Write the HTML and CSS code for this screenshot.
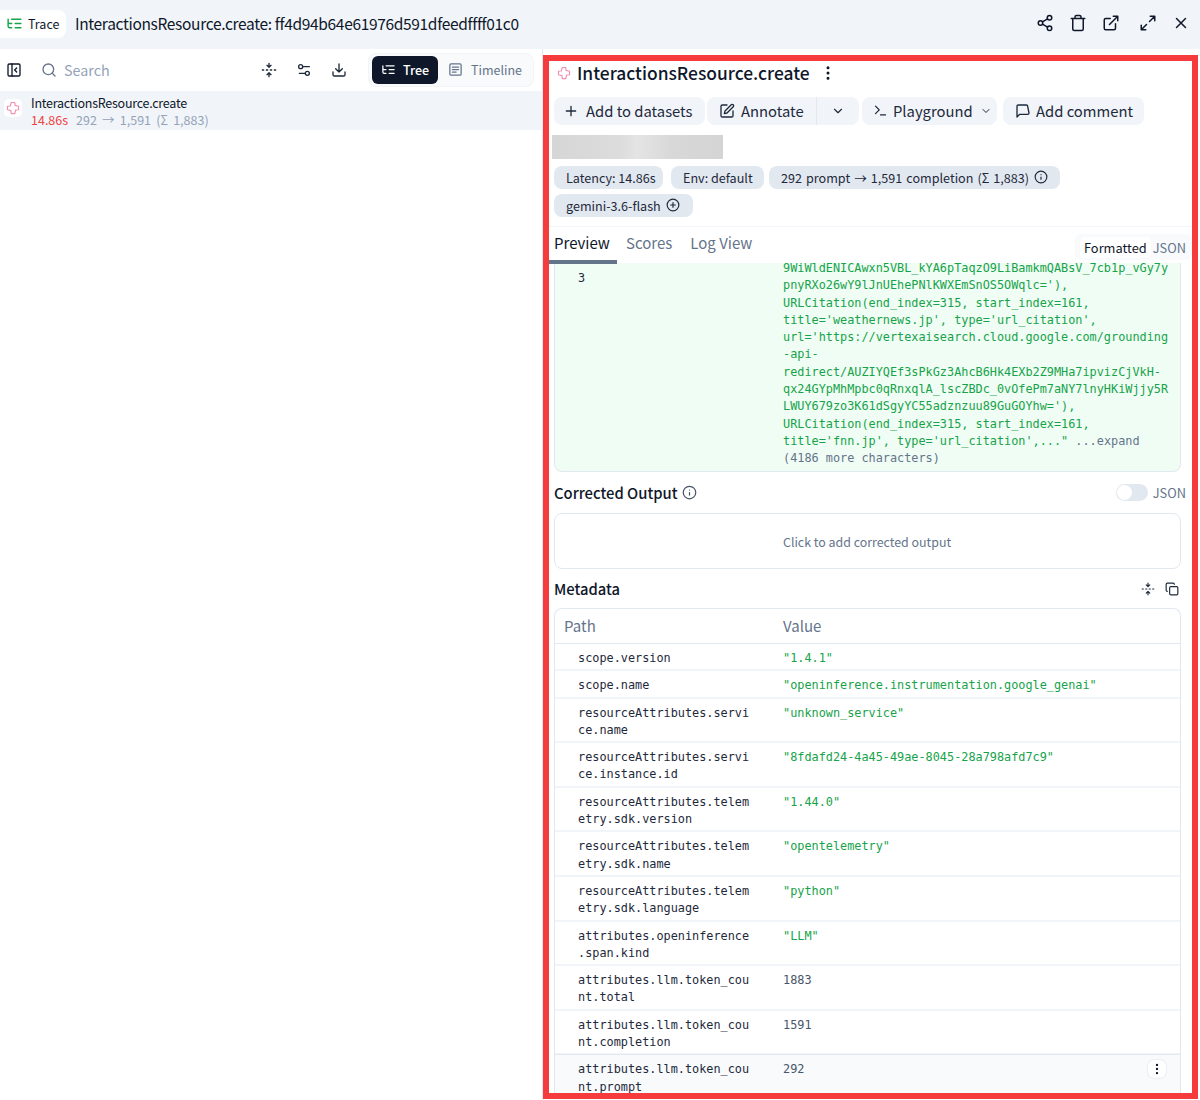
FILE: index.html
```html
<!DOCTYPE html>
<html lang="en">
<head>
<meta charset="utf-8">
<title>Trace</title>
<link rel="stylesheet" href="styles.css">
</head>
<body>
<svg class="defs" aria-hidden="true">
  <symbol id="i-share" viewBox="0 0 24 24"><circle cx="18" cy="5" r="3"/><circle cx="6" cy="12" r="3"/><circle cx="18" cy="19" r="3"/><path d="M8.59 13.51 15.42 17.49M15.41 6.51 8.59 10.49"/></symbol>
  <symbol id="i-trash" viewBox="0 0 24 24"><path d="M3 6h18M19 6v14c0 1-1 2-2 2H7c-1 0-2-1-2-2V6M8 6V4c0-1 1-2 2-2h4c1 0 2 1 2 2v2"/></symbol>
  <symbol id="i-ext" viewBox="0 0 24 24"><path d="M15 3h6v6M10 14 21 3M18 13v6a2 2 0 0 1-2 2H5a2 2 0 0 1-2-2V8a2 2 0 0 1 2-2h6"/></symbol>
  <symbol id="i-expand" viewBox="0 0 24 24"><path d="M15 3h6v6M21 3l-7 7M9 21H3v-6M3 21l7-7"/></symbol>
  <symbol id="i-x" viewBox="0 0 24 24"><path d="M18 6 6 18M6 6l12 12"/></symbol>
  <symbol id="i-panel" viewBox="0 0 24 24"><rect x="3" y="3" width="18" height="18" rx="2"/><path d="M9 3v18M16 15l-3-3 3-3"/></symbol>
  <symbol id="i-search" viewBox="0 0 24 24"><circle cx="11" cy="11" r="8"/><path d="m21 21-4.3-4.3"/></symbol>
  <symbol id="i-fold" viewBox="0 0 24 24"><path d="M12 22v-6M12 8V2M4 12H2M10 12H8M16 12h-2M22 12h-2M15 19l-3-3-3 3M15 5l-3 3-3-3"/></symbol>
  <symbol id="i-settings" viewBox="0 0 24 24"><path d="M20 7h-9M14 17H5"/><circle cx="17" cy="17" r="3"/><circle cx="7" cy="7" r="3"/></symbol>
  <symbol id="i-download" viewBox="0 0 24 24"><path d="M21 15v4a2 2 0 0 1-2 2H5a2 2 0 0 1-2-2v-4M7 10l5 5 5-5M12 15V3"/></symbol>
  <symbol id="i-tree" viewBox="0 0 24 24"><path d="M21 12h-8M21 6H8M21 18h-8M3 6v4c0 1.100.9 2 2 2h3M3 10v6c0 1.100.9 2 2 2h3"/></symbol>
  <symbol id="i-timeline" viewBox="0 0 24 24"><rect x="3" y="3" width="18" height="18" rx="2"/><path d="M7 8h10M7 12h10M7 16h6"/></symbol>
  <symbol id="i-plus" viewBox="0 0 24 24"><path d="M5 12h14M12 5v14"/></symbol>
  <symbol id="i-pen" viewBox="0 0 24 24"><path d="M12 3H5a2 2 0 0 0-2 2v14a2 2 0 0 0 2 2h14a2 2 0 0 0 2-2v-7"/><path d="M18.375 2.625a2.121 2.121 0 1 1 3 3L12 15l-4 1 1-4Z"/></symbol>
  <symbol id="i-chev" viewBox="0 0 24 24"><path d="m6 9 6 6 6-6"/></symbol>
  <symbol id="i-term" viewBox="0 0 24 24"><path d="M4 17l6-6-6-6M12 19h8"/></symbol>
  <symbol id="i-msg" viewBox="0 0 24 24"><path d="M21 15a2 2 0 0 1-2 2H7l-4 4V5a2 2 0 0 1 2-2h12a2 2 0 0 1 2 2z"/></symbol>
  <symbol id="i-info" viewBox="0 0 24 24"><circle cx="12" cy="12" r="10"/><path d="M12 16v-4M12 8h.01"/></symbol>
  <symbol id="i-pluscircle" viewBox="0 0 24 24"><circle cx="12" cy="12" r="10"/><path d="M8 12h8M12 8v8"/></symbol>
  <symbol id="i-copy" viewBox="0 0 24 24"><rect x="8" y="8" width="14" height="14" rx="2"/><path d="M4 16c-1.100 0-2-.9-2-2V4c0-1.100.9-2 2-2h10c1.100 0 2 .9 2 2"/></symbol>
  <symbol id="i-gem" viewBox="0 0 24 24"><path d="M9 2.500h6l.5 5 6 1.500v6l-5 .5-1.500 6H9l-.5-5-6-1.500V9l5-.5z"/></symbol>
  <symbol id="i-more" viewBox="0 0 24 24"><circle cx="12" cy="5" r="1"/><circle cx="12" cy="12" r="1"/><circle cx="12" cy="19" r="1"/></symbol>
</svg>

<header class="topbar">
  <div class="trace-tag"><svg class="ic ic-17 green"><use href="#i-tree"/></svg><span>Trace</span></div>
  <div class="trace-title">InteractionsResource.create: ff4d94b64e61976d591dfeedffff01c0</div>
  <div class="top-actions">
    <svg class="ic ic-18"><use href="#i-share"/></svg>
    <svg class="ic ic-18"><use href="#i-trash"/></svg>
    <svg class="ic ic-18"><use href="#i-ext"/></svg>
    <svg class="ic ic-18 gap-l"><use href="#i-expand"/></svg>
    <svg class="ic ic-18"><use href="#i-x"/></svg>
  </div>
</header>

<main class="layout">
  <aside class="tree-pane">
    <div class="tree-bar">
      <svg class="ic ic-16 dark"><use href="#i-panel"/></svg>
      <div class="search"><svg class="ic ic-16 grey"><use href="#i-search"/></svg><span>Search</span></div>
      <div class="tree-tools">
        <svg class="ic ic-16"><use href="#i-fold"/></svg>
        <svg class="ic ic-16"><use href="#i-settings"/></svg>
        <svg class="ic ic-16"><use href="#i-download"/></svg>
      </div>
      <div class="view-switch">
        <div class="view on"><svg class="ic ic-15"><use href="#i-tree"/></svg>Tree</div>
        <div class="view"><svg class="ic ic-15"><use href="#i-timeline"/></svg>Timeline</div>
      </div>
    </div>
    <div class="tree-row">
      <div class="gem-wrap"><svg class="ic ic-14 pink"><use href="#i-gem"/></svg></div>
      <div class="tree-text">
        <div class="tree-name">InteractionsResource.create</div>
        <div class="tree-meta"><span class="red">14.86s</span><span class="wider">292 → 1,591 (Σ 1,883)</span></div>
      </div>
    </div>
  </aside>

  <section class="detail">
    <div class="detail-title">
      <svg class="ic ic-14 pink"><use href="#i-gem"/></svg>
      <h1>InteractionsResource.create</h1>
      <svg class="ic ic-18 filled"><use href="#i-more"/></svg>
    </div>

    <div class="actions">
      <div class="btn b-add"><svg class="ic ic-16"><use href="#i-plus"/></svg>Add to datasets</div>
      <div class="btn-group">
        <div class="btn b-ann"><svg class="ic ic-16"><use href="#i-pen"/></svg>Annotate</div>
        <div class="btn b-chev"><svg class="ic ic-14"><use href="#i-chev"/></svg></div>
      </div>
      <div class="btn b-play"><svg class="ic ic-15"><use href="#i-term"/></svg>Playground<svg class="ic ic-12"><use href="#i-chev"/></svg></div>
      <div class="btn b-com"><svg class="ic ic-16"><use href="#i-msg"/></svg>Add comment</div>
    </div>

    <div class="blurred"></div>

    <div class="badges">
      <span class="badge b1">Latency: 14.86s</span>
      <span class="badge b2">Env: default</span>
      <span class="badge b3 wide">292 prompt → 1,591 completion (Σ 1,883)<svg class="ic ic-14"><use href="#i-info"/></svg></span>
      <span class="badge b4">gemini-3.6-flash<svg class="ic ic-14"><use href="#i-pluscircle"/></svg></span>
    </div>

    <div class="tabs">
      <div class="tab on">Preview</div>
      <div class="tab">Scores</div>
      <div class="tab">Log View</div>
      <div class="format">
        <span class="fmt on">Formatted</span><span class="fmt">JSON</span>
      </div>
    </div>

    <div class="code-box">
      <div class="code-num">3</div>
      <div class="code">
<pre>9WiWldENICAwxn5VBL_kYA6pTaqzO9LiBamkmQABsV_7cb1p_vGy7y
pnyRXo26wY9lJnUEhePNlKWXEmSnOS5OWqlc='),
URLCitation(end_index=315, start_index=161,
title='weathernews.jp', type='url_citation',
url='https://vertexaisearch.cloud.google.com/grounding
-api-
redirect/AUZIYQEf3sPkGz3AhcB6Hk4EXb2Z9MHa7ipvizCjVkH-
qx24GYpMhMpbc0qRnxqlA_lscZBDc_0vOfePm7aNY7lnyHKiWjjy5R
LWUY679zo3K61dSgyYC55adznzuu89GuGOYhw='),
URLCitation(end_index=315, start_index=161,</pre>
<pre>title='fnn.jp', type='url_citation',..." <span class="muted">...expand</span></pre>
<pre class="muted">(4186 more characters)</pre>
      </div>
    </div>

    <div class="section-head corrected">
      <h2>Corrected Output</h2>
      <svg class="ic ic-15 grey-d"><use href="#i-info"/></svg>
      <div class="toggle-wrap"><span class="toggle"><i></i></span><span>JSON</span></div>
    </div>
    <div class="corrected-box">Click to add corrected output</div>

    <div class="section-head meta">
      <h2>Metadata</h2>
      <div class="meta-tools">
        <svg class="ic ic-14"><use href="#i-fold"/></svg>
        <svg class="ic ic-14"><use href="#i-copy"/></svg>
      </div>
    </div>

    <div class="table">
      <div class="tr th"><div>Path</div><div>Value</div></div>
      <div class="tr"><div class="path">scope.version</div><div class="val">"1.4.1"</div></div>
      <div class="tr"><div class="path">scope.name</div><div class="val">"openinference.instrumentation.google_genai"</div></div>
      <div class="tr"><div class="path">resourceAttributes.service.name</div><div class="val">"unknown_service"</div></div>
      <div class="tr"><div class="path">resourceAttributes.service.instance.id</div><div class="val">"8fdafd24-4a45-49ae-8045-28a798afd7c9"</div></div>
      <div class="tr"><div class="path">resourceAttributes.telemetry.sdk.version</div><div class="val">"1.44.0"</div></div>
      <div class="tr"><div class="path">resourceAttributes.telemetry.sdk.name</div><div class="val">"opentelemetry"</div></div>
      <div class="tr"><div class="path">resourceAttributes.telemetry.sdk.language</div><div class="val">"python"</div></div>
      <div class="tr"><div class="path">attributes.openinference.span.kind</div><div class="val">"LLM"</div></div>
      <div class="tr"><div class="path">attributes.llm.token_count.total</div><div class="val num">1883</div></div>
      <div class="tr"><div class="path">attributes.llm.token_count.completion</div><div class="val num">1591</div></div>
      <div class="tr hover"><div class="path">attributes.llm.token_count.prompt</div><div class="val num">292</div>
        <div class="row-menu"><svg class="ic ic-14 filled"><use href="#i-more"/></svg></div>
      </div>
    </div>
  </section>
</main>
</body>
</html>
```

FILE: styles.css
```css
* { box-sizing: border-box; }
html, body { margin: 0; height: 1100px; overflow: hidden; }
body {
  background: #f1f5f9;
  color: #0f172a;
  font-family: "Noto Sans CJK SC", "Noto Sans", sans-serif;
  font-size: 14px;
}
.defs { width: 0; height: 0; position: absolute; }

.ic {
  fill: none;
  stroke: currentColor;
  stroke-width: 2;
  stroke-linecap: round;
  stroke-linejoin: round;
  flex: none;
}
.ic-12 { width: 12px; height: 12px; }
.ic-14 { width: 14px; height: 14px; }
.ic-15 { width: 15px; height: 15px; }
.ic-16 { width: 16px; height: 16px; }
.ic-17 { width: 17px; height: 17px; }
.ic-18 { width: 18px; height: 18px; }
.green { color: #16a34a; }
.pink { color: #f48fb1; }
.grey { color: #64748b; }
.grey-d { color: #475569; }
.dark { color: #0f172a; }
.filled { fill: currentColor; }
.wide { word-spacing: 1.200px; }
.wider { word-spacing: 2.400px; }

/* top bar */
.topbar {
  height: 49px;
  display: flex;
  align-items: center;
  padding-right: 10px;
}
.trace-tag {
  width: 66px;
  height: 28px;
  margin-top: -2px;
  background: #fff;
  border-radius: 0 8px 8px 0;
  display: flex;
  align-items: center;
  gap: 5px;
  padding-left: 6px;
  font-size: 12.500px;
}
.trace-title { margin-left: 9px; font-size: 15.500px; letter-spacing: -.33px; margin-top: -3px; }
.top-actions {
  margin-left: auto;
  margin-top: -3px;
  display: flex;
  align-items: center;
  gap: 15px;
  color: #0f172a;
}
.gap-l { margin-left: 4px; }

/* layout */
.layout { display: flex; height: 1051px; background: #fff; }
.tree-pane { width: 543px; flex: none; border-right: 1px solid #e2e8f0; }

.tree-bar {
  height: 42px;
  display: flex;
  align-items: center;
  padding-left: 6px;
  padding-right: 8px;
}
.search {
  display: flex;
  align-items: center;
  gap: 7px;
  margin-left: 19px;
  margin-top: -1px;
  font-size: 14.300px;
  color: #94a3b8;
}
.tree-tools { margin-left: auto; display: flex; gap: 19px; color: #1e293b; margin-right: 21px; }
.view-switch {
  width: 166px;
  height: 34px;
  padding: 3px;
  background: #f8fafc;
  border: 1px solid #f1f5f9;
  border-radius: 8px;
  display: flex;
  align-items: center;
}
.view {
  display: flex;
  align-items: center;
  gap: 8px;
  height: 28px;
  padding: 0 10px 1px;
  border-radius: 6px;
  font-size: 12.500px;
  color: #64748b;
}
.view.on { background: #0f172a; color: #fff; width: 66px; font-weight: 500; padding: 0 9px 1px; gap: 7px; }

.tree-row {
  height: 39px;
  background: #f1f5f9;
  display: flex;
  align-items: center;
  padding-left: 4px;
}
.gem-wrap {
  width: 18px;
  height: 18px;
  border-radius: 5px;
  background: #fff;
  display: flex;
  align-items: center;
  justify-content: center;
  margin-top: -6px;
}
.tree-text { margin-left: 9px; }
.tree-name { font-size: 12.500px; letter-spacing: -.25px; line-height: 17px; }
.tree-meta { font-size: 12.500px; line-height: 17px; color: #94a3b8; display: flex; gap: 8px; }
.red { color: #ef4444; }

/* detail */
.detail {
  margin-top: 6px;
  width: 655px;
  height: 1044px;
  flex: none;
  border: 6px solid #f53b3b;
  padding: 0 0 0 5px;
  overflow: hidden;
  background: #fff;
}
.detail-title {
  height: 26px;
  display: flex;
  align-items: center;
  margin-top: -1px;
  padding-left: 3px;
}
.detail-title h1 { margin: 0 6px 0 6px; font-size: 17.400px; font-weight: 500; line-height: 26px; }
.detail-title .filled { margin-left: 3px; }

.actions { display: flex; margin-top: 11px; gap: 2px; }
.btn {
  height: 28px;
  padding-bottom: 1px;
  background: #f1f5f9;
  border-radius: 8px;
  display: flex;
  align-items: center;
  font-size: 14.800px;
  color: #1e293b;
}
.b-add { width: 151px; padding-left: 9px; gap: 7px; }
.btn-group { display: flex; margin-right: 1px; }
.b-ann { width: 110px; padding-left: 12px; gap: 6px; border-radius: 8px 0 0 8px; border-right: 1px solid #e2e8f0; }
.b-chev { width: 42px; justify-content: center; border-radius: 0 8px 8px 0; }
.b-play { width: 135px; padding-left: 11px; gap: 5px; margin-right: 4px; }
.b-play .ic-12 { margin-left: 2px; }
.b-com { width: 141px; padding-left: 12px; gap: 5px; }

.blurred {
  margin: 10px 0 0 -2px;
  width: 171px;
  height: 24px;
  background: linear-gradient(90deg, #d6d6d6, #dcdcdc 40%, #e4e4e4 50%, #d8d8d8 70%, #d4d4d4);
  filter: blur(.5px);
}

.badges {
  display: flex;
  flex-wrap: wrap;
  gap: 5px;
  margin-top: 7px;
  width: 540px;
}
.badge {
  height: 23px;
  padding: 0 12px 1px;
  border-radius: 8px;
  background: #e2e8f0;
  display: inline-flex;
  align-items: center;
  gap: 5px;
  font-size: 12.600px;
  color: #1e293b;
  white-space: nowrap;
}
.b1 { width: 109px; margin-right: 3px; }
.b2 { width: 93px; }
.b3 { width: 291px; justify-content: space-between; }
.b4 { width: 139px; }

.tabs {
  display: flex;
  margin: 9px 0 0 -5px;
  height: 37px;
  border-top: 1px solid #f1f5f9;
  position: relative;
}
.tab {
  height: 37px;
  line-height: 32px;
  padding: 0 9px;
  font-size: 15px;
  color: #64748b;
}
.tab.on { color: #0f172a; width: 68px; padding-left: 5px; border-bottom: 4px solid #64748b; }
.format {
  position: absolute;
  right: 0;
  top: 7px;
  width: 117px;
  height: 26px;
  padding: 2px 6px 2px 5px;
  background: #f8fafc;
  border-radius: 6px;
  display: flex;
  align-items: center;
  justify-content: space-between;
  font-size: 12.800px;
  color: #64748b;
}
.fmt.on { background: #fff; color: #0f172a; border-radius: 5px; padding: 1px 4px; }

.code-box {
  width: 627px;
  height: 209px;
  background: #f0fdf4;
  border: 1px solid #e2e8f0;
  border-top: 0;
  border-radius: 0 0 8px 8px;
  display: flex;
  font-family: "DejaVu Sans Mono", monospace;
  font-size: 11.850px;
}
.code-num { width: 228px; padding: 7px 0 0 23px; line-height: 17.300px; color: #1e293b; }
.code { margin-top: -3px; color: #16a34a; }
.code pre { margin: 0; font: inherit; line-height: 17.300px; }
.muted { color: #64748b; }

.section-head { display: flex; align-items: center; }
.section-head h2 { margin: 0; font-size: 14.800px; font-weight: 500; color: #0f172a; line-height: 24px; }
.corrected { height: 27px; margin-top: 7px; width: 632px; gap: 4px; }
.toggle-wrap { margin-left: auto; display: flex; align-items: center; gap: 5px; font-size: 12.800px; color: #64748b; }
.toggle { width: 32px; height: 17px; background: #e2e8f0; border-radius: 9px; padding: 1px; display: block; }
.toggle i { display: block; width: 15px; height: 15px; background: #fff; border-radius: 50%; }

.corrected-box {
  margin-top: 7px;
  width: 627px;
  height: 56px;
  border: 1px solid #e2e8f0;
  border-radius: 8px;
  padding-left: 228px;
  line-height: 56px;
  font-size: 12.400px;
  color: #64748b;
}
.meta { height: 27px; margin-top: 6px; width: 627px; }
.meta-tools { margin-left: auto; display: flex; gap: 10px; color: #1e293b; padding-right: 2px; }

.table {
  margin-top: 6px;
  width: 627px;
  border: 1px solid #e2e8f0;
  border-bottom: 0;
  border-radius: 8px 8px 0 0;
}
.tr {
  display: grid;
  grid-template-columns: 228px 1fr;
  border-bottom: 2px solid #f1f5f9;
  position: relative;
  font-family: "DejaVu Sans Mono", monospace;
  font-size: 11.850px;
  line-height: 17.300px;
  padding: 6px 0 2px;
}
.th {
  font-family: "Noto Sans CJK SC", "Noto Sans", sans-serif;
  font-size: 15px;
  color: #64748b;
  height: 35px;
  align-items: center;
  padding: 0;
  border-bottom: 1px solid #e2e8f0;
}
.th div:first-child { padding-left: 9px; }
.path { padding-left: 23px; padding-right: 30px; line-break: anywhere; color: #1e293b; }
.val { color: #16a34a; }
.val.num { color: #475569; }
.hover { background: #f8fafc; border-top: 1px solid #e2e8f0; margin-top: -1px; border-bottom: 0; }
.row-menu {
  position: absolute;
  right: 14px;
  top: 5px;
  width: 18px;
  height: 18px;
  background: #fff;
  border-radius: 6px;
  box-shadow: 0 0 2px rgba(15, 23, 42, .15);
  display: flex;
  align-items: center;
  justify-content: center;
}
```
